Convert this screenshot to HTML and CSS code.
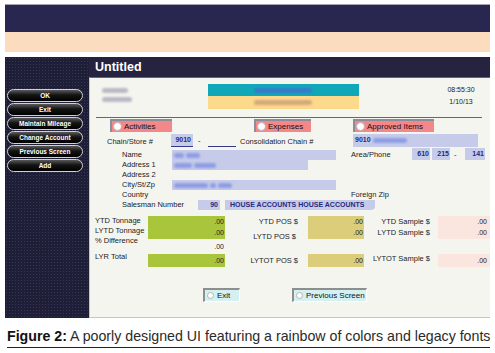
FILE: index.html
```html
<!DOCTYPE html>
<html lang="en">
<head>
  <meta charset="UTF-8">
  <title>Untitled</title>
  <link rel="stylesheet" href="styles.css">
</head>
<body>
  <div class="figure">
    <div class="browser-bar"></div>
    <div class="browser-strip"></div>

    <div class="app">
      <div class="sidebar">
        <button class="nav-btn">OK</button>
        <button class="nav-btn">Exit</button>
        <button class="nav-btn">Maintain Mileage</button>
        <button class="nav-btn">Change Account</button>
        <button class="nav-btn">Previous Screen</button>
        <button class="nav-btn">Add</button>
      </div>

      <div class="titlebar">Untitled</div>

      <div class="content">
        <div class="head">
          <div class="who">
            <span class="smudge smudge-a"></span>
            <span class="smudge smudge-b"></span>
          </div>
          <div class="banner">
            <div class="banner-teal"><span class="blob blob-teal"></span></div>
            <div class="banner-gold"><span class="blob blob-gold"></span></div>
          </div>
          <div class="clock">08:55:30<br>1/10/13</div>
        </div>

        <div class="rule"></div>

        <div class="tabs">
          <div class="tab tab-activities"><span class="radio"></span>Activities</div>
          <div class="tab tab-expenses"><span class="radio"></span>Expenses</div>
          <div class="tab tab-approved"><span class="radio"></span>Approved Items</div>
        </div>

        <div class="chain-row">
          <span class="lbl lbl-chain">Chain/Store #</span>
          <span class="field f-store">9010</span>
          <span class="dash">-</span>
          <span class="f-line"></span>
          <span class="lbl lbl-consol">Consolidation Chain #</span>
          <span class="field f-consol">9010 <span class="blob blob-lav blob-w34"></span></span>
        </div>

        <div class="address">
          <div class="arow">
            <span class="alabel">Name</span>
            <span class="afield af-wide">
              <span class="blob blob-lav blob-w10"></span>
              <span class="blob blob-lav blob-w14"></span>
            </span>
            <span class="alabel rlabel">Area/Phone</span>
            <span class="ph ph-1">610</span>
            <span class="ph ph-2">215</span>
            <span class="ph-dash">-</span>
            <span class="ph ph-3">141</span>
          </div>
          <div class="arow">
            <span class="alabel">Address 1</span>
            <span class="afield af-mid">
              <span class="blob blob-lav blob-w18"></span>
              <span class="blob blob-lav blob-w22"></span>
            </span>
          </div>
          <div class="arow">
            <span class="alabel">Address 2</span>
          </div>
          <div class="arow">
            <span class="alabel">City/St/Zp</span>
            <span class="afield af-wide">
              <span class="blob blob-lav blob-w34"></span>
              <span class="blob blob-lav blob-w6"></span>
              <span class="blob blob-lav blob-w14"></span>
            </span>
          </div>
          <div class="arow">
            <span class="alabel">Country</span>
            <span class="alabel zip-label">Foreign Zip</span>
          </div>
          <div class="arow">
            <span class="alabel sales-label">Salesman Number</span>
            <span class="afield af-sales">90</span>
            <span class="afield af-house">HOUSE ACCOUNTS HOUSE ACCOUNTS</span>
          </div>
        </div>

        <div class="totals">
          <div class="t-labels">
            <span>YTD Tonnage</span>
            <span>LYTD Tonnage</span>
            <span>% Difference</span>
          </div>
          <div class="t-box green"><span>.00</span><span>.00</span></div>
          <div class="t-rlabels pos"><span>YTD POS $</span><span>LYTD POS $</span></div>
          <div class="t-box khaki"><span>.00</span><span>.00</span></div>
          <div class="t-rlabels sample"><span>YTD Sample $</span><span>LYTD Sample $</span></div>
          <div class="t-box blush"><span>.00</span><span>.00</span></div>

          <div class="t-diff">.00</div>

          <div class="t-lyr">LYR Total</div>
          <div class="t-box t-one green"><span>.00</span></div>
          <div class="t-rlabel t-pos-tot">LYTOT POS $</div>
          <div class="t-box t-one khaki"><span>.00</span></div>
          <div class="t-rlabel t-sample-tot">LYTOT Sample $</div>
          <div class="t-box t-one blush"><span>.00</span></div>
        </div>

        <div class="actions">
          <div class="form-btn btn-exit"><span class="radio small"></span>Exit</div>
          <div class="form-btn btn-prev"><span class="radio small"></span>Previous Screen</div>
        </div>
      </div>
    </div>

    <p class="caption"><b>Figure 2:</b> A poorly designed UI featuring a rainbow of colors and legacy fonts</p>
  </div>
</body>
</html>
```

FILE: styles.css
```css
* {
  box-sizing: border-box;
}

body {
  margin: 0;
  background-color: #fff;
  font-family: "Liberation Sans", Arial, sans-serif;
}

.figure {
  width: 495px;
  padding: 4px 5px 0;
}

.browser-bar {
  height: 28px;
  background-color: #292750;
  border-top: 1px solid #a4a4b0;
}

.browser-strip {
  height: 20px;
  background-color: #fbdcbf;
}

/* app window */
.app {
  margin-top: 5px;
  display: grid;
  grid-template-columns: 84px 401px;
  grid-template-rows: 20px 241px;
  background-color: #25233f;
}

.sidebar {
  grid-row: 1 / 3;
  display: flex;
  flex-direction: column;
  gap: 1px;
  padding: 32px 0 0 2px;
  background-color: #1f1e37;
  background-image: radial-gradient(circle, #37375a 0.7px, transparent 0.9px);
  background-size: 3px 3px;
}

.nav-btn {
  width: 76px;
  height: 13px;
  padding: 0;
  border: 1px solid #cfcfd8;
  border-radius: 7px;
  background: linear-gradient(to bottom, #5a5a5a 0%, #141414 45%, #000 100%);
  color: #fff;
  font-family: "Liberation Sans", Arial, sans-serif;
  font-size: 6.5px;
  font-weight: bold;
  line-height: 11px;
}

.titlebar {
  padding-left: 6px;
  color: #fff;
  font-size: 12.5px;
  font-weight: bold;
  line-height: 20px;
}

.content {
  background-color: #f5f5f0;
  border-top: 1px solid #3d70b2;
  border-left: 1px solid #a2d2e6;
  border-bottom: 1px solid #a2d2e6;
  color: #222;
  font-size: 7.5px;
}

/* header */
.head {
  display: flex;
  height: 25px;
  margin-top: 6px;
}

.who {
  width: 118px;
  padding: 4px 0 0 12px;
}

.smudge {
  display: block;
  height: 5px;
  border-radius: 3px;
  background-color: #b9b9c6;
  filter: blur(1.2px);
}

.smudge-a {
  width: 26px;
  margin-bottom: 4px;
}

.smudge-b {
  width: 30px;
}

.banner {
  width: 151px;
}

.banner-teal,
.banner-gold {
  display: flex;
  align-items: center;
  padding-left: 46px;
}

.banner-teal {
  height: 12px;
  background-color: #10a8b8;
}

.banner-gold {
  height: 13px;
  background-color: #fdd98c;
}

.blob {
  display: inline-block;
  height: 5px;
  border-radius: 3px;
  filter: blur(1px);
}

.blob-teal {
  width: 58px;
  background-color: #3b78c9;
}

.blob-gold {
  width: 58px;
  background-color: #d5a97a;
}

.clock {
  width: 32px;
  margin-left: 86px;
  text-align: center;
  font-size: 7px;
  line-height: 12px;
}

.rule {
  margin: 8px 8px 0 6px;
  border-top: 1px solid #62648a;
}

/* tabs */
.tabs {
  display: flex;
  height: 13px;
  margin-top: 1px;
  padding-left: 20px;
}

.tab {
  display: flex;
  align-items: center;
  height: 13px;
  background-color: #f4878a;
  border-top: 2px solid #8d8d97;
  border-left: 2px solid #8d8d97;
  color: #111;
  font-size: 8px;
}

.tab-activities {
  width: 62px;
}

.tab-expenses {
  width: 57px;
  margin-left: 82px;
}

.tab-approved {
  width: 81px;
  margin-left: 42px;
}

.radio {
  width: 9px;
  height: 9px;
  margin: 0 2px 0 1px;
  border: 1px solid #b4b4b4;
  border-radius: 50%;
  background-color: #fff;
}

.radio.small {
  width: 7px;
  height: 7px;
  margin-right: 3px;
}

/* chain row */
.chain-row {
  display: flex;
  height: 13px;
  margin-top: 2px;
}

.lbl {
  align-self: flex-end;
  line-height: 11px;
}

.lbl-chain {
  width: 64px;
  margin-left: 17px;
}

.field {
  background-color: #c6cbea;
  color: #262a7a;
  font-size: 7px;
  font-weight: bold;
  line-height: 12px;
}

.f-store {
  width: 22px;
  padding-right: 2px;
  text-align: right;
  border-bottom: 1px solid #35398a;
}

.dash {
  width: 15px;
  padding-left: 5px;
  line-height: 13px;
}

.f-line {
  width: 28px;
  border-bottom: 1px solid #35398a;
}

.lbl-consol {
  width: 113px;
  margin-left: 4px;
}

.f-consol {
  width: 125px;
  padding-left: 2px;
}

.blob-lav {
  background-color: #8f9de3;
  vertical-align: middle;
}

.blob-w6 { width: 6px; }
.blob-w10 { width: 10px; }
.blob-w14 { width: 14px; }
.blob-w18 { width: 18px; }
.blob-w22 { width: 22px; }
.blob-w34 { width: 34px; }

/* address block */
.address {
  margin-top: 3px;
}

.arow {
  display: flex;
  align-items: flex-start;
  height: 10px;
  line-height: 10px;
}

.alabel {
  width: 50px;
  margin-left: 32px;
}

.afield {
  display: flex;
  align-items: center;
  gap: 2px;
  height: 10px;
  padding-left: 2px;
  background-color: #c6cbea;
}

.af-wide {
  width: 164px;
}

.af-mid {
  width: 136px;
}

.rlabel {
  width: 61px;
  margin-left: 15px;
}

.zip-label {
  margin-left: 179px;
}

.ph {
  height: 12px;
  margin-top: -2px;
  padding-right: 1px;
  background-color: #c6cbea;
  color: #262a7a;
  font-size: 7px;
  font-weight: bold;
  line-height: 12px;
  text-align: right;
}

.ph-1 {
  width: 18px;
}

.ph-2 {
  width: 18px;
  margin-left: 2px;
}

.ph-dash {
  width: 15px;
  padding-left: 4px;
}

.ph-3 {
  width: 20px;
}

.sales-label {
  width: 76px;
}

.af-sales,
.af-house {
  color: #262a7a;
  font-size: 7px;
  font-weight: bold;
}

.af-sales {
  width: 22px;
  justify-content: flex-end;
  padding-right: 2px;
}

.af-house {
  width: 150px;
  margin-left: 5px;
  padding-left: 5px;
  border-radius: 0 0 4px 0;
}

/* totals */
.totals {
  display: grid;
  grid-template-columns: 53px 77px 83px 56px 74px 52px;
  grid-template-rows: 23px 15px 13px;
  margin: 6px 0 0 5px;
  white-space: nowrap;
}

.t-labels {
  grid-row: 1 / 3;
  display: flex;
  flex-direction: column;
  line-height: 10px;
}

.t-box {
  display: flex;
  flex-direction: column;
  align-items: flex-end;
  padding-right: 1px;
  font-size: 7px;
  line-height: 11px;
}

.t-box.t-one {
  grid-row: 3;
  line-height: 13px;
}

.green {
  background-color: #a9c53c;
}

.khaki {
  background-color: #dbcd7a;
}

.blush {
  background-color: #fbe6df;
  padding-right: 3px;
}

.t-rlabels {
  display: flex;
  flex-direction: column;
  align-items: flex-end;
  line-height: 11px;
}

.t-rlabels.pos {
  padding-right: 10px;
}

.t-rlabels.pos span + span {
  margin-top: 4px;
  margin-right: 2px;
}

.t-rlabels.sample {
  padding-right: 8px;
}

.t-diff {
  grid-column: 2;
  grid-row: 2;
  padding-right: 1px;
  text-align: right;
  font-size: 7px;
  line-height: 15px;
}

.t-lyr {
  grid-column: 1;
  grid-row: 3;
  margin-top: -2px;
  line-height: 10px;
}

.t-rlabel {
  grid-row: 3;
  text-align: right;
  line-height: 13px;
}

.t-pos-tot {
  padding-right: 10px;
}

.t-sample-tot {
  padding-right: 8px;
  line-height: 9px;
}

/* bottom buttons */
.actions {
  display: flex;
  height: 14px;
  margin-top: 21px;
  padding-left: 113px;
}

.form-btn {
  display: flex;
  align-items: center;
  height: 14px;
  padding-left: 1px;
  background-color: #d5f0f1;
  border-top: 2px solid #8e8e8e;
  border-left: 2px solid #8e8e8e;
  border-right: 1px solid #fff;
  border-bottom: 1px solid #fff;
  color: #111;
  font-size: 8px;
}

.btn-exit {
  width: 37px;
}

.btn-prev {
  width: 75px;
  margin-left: 52px;
}

/* caption */
.caption {
  margin: 10px 0 0 2px;
  padding-bottom: 3px;
  width: 483px;
  border-bottom: 1px solid #222;
  color: #2a2a2a;
  font-size: 14.2px;
  line-height: 16px;
  white-space: nowrap;
}

.caption b {
  color: #111;
}
```
